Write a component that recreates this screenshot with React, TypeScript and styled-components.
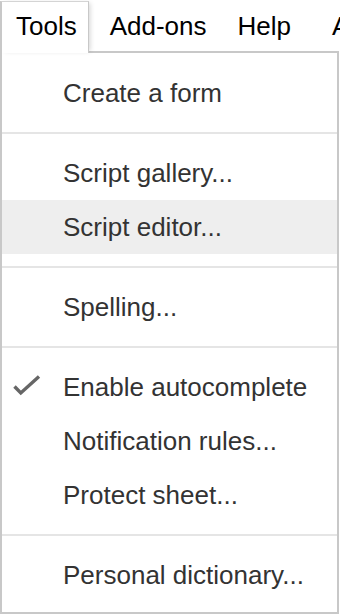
import styled, { createGlobalStyle } from 'styled-components';

const GlobalStyle = createGlobalStyle`
  html, body {
    margin: 0;
    padding: 0;
    background: #fff;
    overflow: hidden;
  }
  body {
    font-family: "Liberation Sans", Arial, sans-serif;
  }
`;

const MenuBar = styled.div`
  display: flex;
  height: 51px;
  width: 340px;
  overflow-x: clip;
  overflow-y: visible;
  white-space: nowrap;
  font-size: 26px;
  color: #000;
`;

const BarTab = styled.div`
  position: relative;
  z-index: 2;
  box-sizing: border-box;
  height: 52px;
  margin-top: 1px;
  padding: 0 11px 0 14px;
  line-height: 48px;
  background: #fff;
  border-top: 1px solid #d4d4d4;
  border-left: 2px solid #c8c8c8;
  border-right: 1px solid #c8c8c8;
  box-shadow: 3px 0 5px -2px rgba(0, 0, 0, 0.18);
`;

const BarItem = styled.div<{ $gap?: number }>`
  margin-top: 2px;
  margin-left: ${(p) => p.$gap ?? 0}px;
  padding: 0 14.5px;
  line-height: 48px;
`;

const Panel = styled.div`
  position: relative;
  z-index: 1;
  box-sizing: border-box;
  width: 339px;
  padding: 13px 0 10px;
  border: 2px solid #c8c8c8;
  background: #fff;
  font-size: 26px;
  color: #333;
`;

const Item = styled.div<{ $active?: boolean }>`
  display: flex;
  align-items: center;
  height: 54px;
  line-height: 54px;
  white-space: nowrap;
  background: ${(p) => (p.$active ? '#eeeeee' : 'transparent')};
`;

const CheckSlot = styled.div`
  display: flex;
  align-items: center;
  box-sizing: border-box;
  width: 61px;
  height: 100%;
  padding-left: 10px;
  flex-shrink: 0;
`;

const CheckIcon = styled.svg`
  margin-top: -5px;
`;

const Separator = styled.div`
  height: 2px;
  margin: 12px 0;
  background: #e5e5e5;
`;

type Entry = { label: string; checked?: boolean; active?: boolean } | 'sep';

const entries: Entry[] = [
  { label: 'Create a form' },
  'sep',
  { label: 'Script gallery...' },
  { label: 'Script editor...', active: true },
  'sep',
  { label: 'Spelling...' },
  'sep',
  { label: 'Enable autocomplete', checked: true },
  { label: 'Notification rules...' },
  { label: 'Protect sheet...' },
  'sep',
  { label: 'Personal dictionary...' },
];

export default function App() {
  return (
    <>
      <GlobalStyle />
      <MenuBar>
        <BarTab>Tools</BarTab>
        <BarItem $gap={6.5}>Add-ons</BarItem>
        <BarItem $gap={2}>Help</BarItem>
        <BarItem $gap={12}>Accessibility</BarItem>
      </MenuBar>
      <Panel>
        {entries.map((e, i) =>
          e === 'sep' ? (
            <Separator key={i} />
          ) : (
            <Item key={i} $active={e.active}>
              <CheckSlot>
                {e.checked && (
                  <CheckIcon width="30" height="22" viewBox="0 0 30 22">
                    <polyline
                      points="2.5,12.5 8.8,19 27,2.5"
                      fill="none"
                      stroke="#666"
                      strokeWidth="3.4"
                      strokeLinejoin="miter"
                    />
                  </CheckIcon>
                )}
              </CheckSlot>
              {e.label}
            </Item>
          )
        )}
      </Panel>
    </>
  );
}
